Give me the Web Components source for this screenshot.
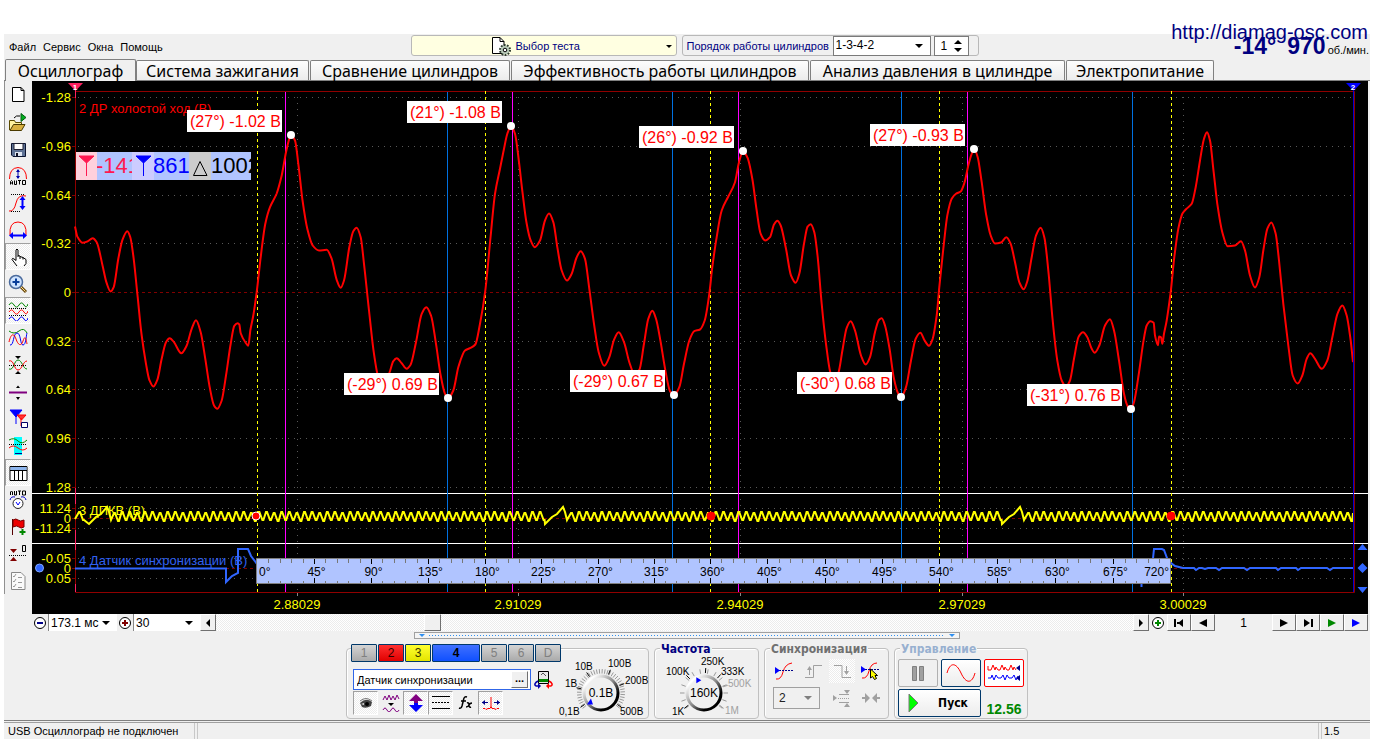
<!DOCTYPE html>
<html lang="ru">
<head>
<meta charset="utf-8">
<title>Осциллограф</title>
<style>
  body { margin: 0; background: #fff; font: 11px/14px "Liberation Sans", Arial, sans-serif; color: #000; }
</style>
</head>
<body>
<osc-app></osc-app>
<script>
const RESET = `
  *, :host { box-sizing: border-box; }
  button, input, select { font: inherit; color: inherit; margin: 0; padding: 0; border: 0; border-radius: 0; background: none; outline: 0; appearance: none; }
  button { display: flex; align-items: center; justify-content: center; }
  svg { display: block; }
  .dd { position: relative; display: flex; }
  .dd select { width: 100%; }
  .dd::after { content: ""; position: absolute; right: 7px; top: 50%; margin-top: -2px; border: 4px solid transparent; border-top-color: currentColor; border-bottom: 0; pointer-events: none; }
`;
function define(name, html, init) {
  const tpl = document.createElement('template');
  customElements.define(name, class extends HTMLElement {
    connectedCallback() {
      if (this.shadowRoot) return;
      tpl.innerHTML = typeof html === 'function' ? html(this) : html;
      this.attachShadow({ mode: 'open' }).append(tpl.content.cloneNode(true));
      if (init) init(this.shadowRoot, this);
    }
  });
}
const DITHER = 'background: repeating-conic-gradient(#fff 0 25%, #ececec 0 50%) 0 0 / 2px 2px;';

/* ---------- header ---------- */
define('osc-header', `
<style>${RESET}
  :host { display: grid; grid-template-columns: 1fr auto 1fr; height: 25px; position: relative; }
  nav { display: flex; gap: 7px; padding: 6px 5px 0; }
  nav a { color: #000; text-decoration: none; }
  .mid { display: flex; gap: 5px; margin-left: 15px; padding-top: 1px; color: navy; }
  .test { width: 266px; height: 21px; border: 1px solid #b8b8b8; border-radius: 3px; background: #ffffe1; position: relative; justify-content: flex-start; padding-left: 78px; gap: 4px; }
  .test::after { content: ""; position: absolute; right: 4px; top: 9px; border: 3px solid transparent; border-top-color: #000; border-bottom: 0; }
  .order { width: 297px; height: 21px; border: 1px solid #b8b8b8; border-radius: 3px; display: flex; align-items: center; padding-left: 4px; gap: 3px; }
  .order > label { flex: 1; white-space: nowrap; }
  .order .dd { flex: none; width: 98px; height: 20px; border: 1px solid #7a7a7a; background: #fff; color: #000; }
  .dd select { padding: 0 2px 2px; font-size: 12px; }
  .spin { width: 35px; height: 20px; border: 1px solid #7a7a7a; background: #fff; margin-right: 9px; display: flex; align-items: center; justify-content: space-between; color: #000; padding: 0 6px; }
  .spin input { width: 12px; font-size: 12px; }
  .rpm { display: flex; justify-content: flex-end; align-items: baseline; gap: 11px; color: navy; font: bold 23px/25px "Liberation Sans", Arial, sans-serif; padding-right: 1px; }
  .rpm small { font: 11px/14px "Liberation Sans", Arial, sans-serif; color: #000; margin-left: -9px; }
  .site { position: absolute; right: 2px; top: -14px; color: navy; font-size: 20px; line-height: 24px; text-decoration: none; }
</style>
<nav><a href="#file">Файл</a><a href="#service">Сервис</a><a href="#windows">Окна</a><a href="#help">Помощь</a></nav>
<div class="mid">
  <button class="test">
    <svg width="22" height="20" viewBox="0 0 22 20"><path d="M2.500 1.500H10l4 4V17.500H2.500Z" fill="#fff" stroke="#000"/><path d="M10 1.500v4h4" fill="none" stroke="#000"/><circle cx="15" cy="14" r="4.500" fill="#b9cbb9" stroke="#2c3a2c" stroke-width="3" stroke-dasharray="1.600 1.200"/><circle cx="15" cy="14" r="4" fill="#b9cbb9"/><circle cx="15" cy="14" r="1.800" fill="#fff" stroke="#000"/></svg>
    <span>Выбор теста</span></button>
  <div class="order"><label for="ord">Порядок работы цилиндров</label>
    <div class="dd"><select id="ord"><option>1-3-4-2</option></select></div>
    <div class="spin"><input aria-label="Цилиндр" value="1"><svg width="8" height="14" viewBox="0 0 8 14"><path d="M0 5 4 1 8 5ZM0 9 4 13 8 9Z"/></svg></div>
  </div>
</div>
<div class="rpm"><span>-14°</span><span>970</span><small>об./мин.</small></div>
<a class="site" href="http://diamag-osc.com">http://diamag-osc.com</a>
`);

/* ---------- tabs ---------- */
define('osc-tabs', `
<style>${RESET}
  :host { display: flex; gap: 1px; height: 22px; align-items: flex-end; border-bottom: 1px solid #808080; font: 16px/20px "Noto Sans", "Open Sans", sans-serif; }
  button { height: 20px; padding: 0; white-space: nowrap; border: 1px solid #808080; border-bottom: 0; border-radius: 2px 2px 0 0; background: linear-gradient(#fdfdfd, #ececec); }
  button[aria-selected=true] { height: 22px; margin: 0 -1px -1px 1px; background: #f0f0f0; }
</style>
<button role="tab" aria-selected="true" style="width:131px">Осциллограф</button><button role="tab" style="width:173px">Система зажигания</button><button role="tab" style="width:200px">Сравнение цилиндров</button><button role="tab" style="width:298px">Эффективность работы цилиндров</button><button role="tab" style="width:255px">Анализ давления в цилиндре</button><button role="tab" style="width:148px">Электропитание</button>
`);

/* ---------- left tool rail ---------- */
const wave = (y, c, a = 3) => `<path d="M1 ${y}q2.500-${a * 1.4} 5 0t5 0 5 0 4-1" stroke="${c}"/>`;
const TOOLS = [
  ['Новый', '<path d="M4.500 2.500H13l3 3V16.500H4.500Z" fill="#fff" stroke="#000"/><path d="M13 2.500v3h3" stroke="#000"/>'],
  ['Открыть', '<path d="M1.500 18V8.500h5l1 2h6V13" fill="#fff3a0" stroke="#5a4a00"/><path d="M2 18.500 5.500 12.500H17L13.500 18.500Z" fill="#d8b040" stroke="#4a3a00"/><path d="M13 1.500v8l5-4Z" fill="#00b020" stroke="#045a10"/><path d="M6 6q2-3 6-2" stroke="#000"/>'],
  ['Сохранить', '<path d="M3.500 4.500H17.500V17.500H5L3.500 16Z" fill="#5f7396" stroke="#0c1430"/><path d="M6 4.500h9v6H6Z" fill="#fff" stroke="#223"/><path d="M7 13h7v4H7Z" fill="#dfe6f2"/><path d="M8 14h2v3H8Z" fill="#112"/>'],
  ['Авто', '<path d="M1.500 13q0-11 8.500-11.500Q18.500 2 18.500 13" stroke="#f00"/><path d="M10 4v8" stroke="#00a"/><path d="M8 6l2-3 2 3ZM8 10l2 3 2-3Z" fill="#00a"/><path d="M2.500 18.500v-3l1-1 1 1v3M3 17h2M6.500 14.500v4h2v-4M10 14.500h3M11.500 14.500v4M14.500 14.500h3v4h-3Z" stroke="#000"/>'],
  ['Амплитуда', '<path d="M1 18q5 1 7-8T18 3" stroke="#f00"/><path d="M3 1.500h14M3 18.500h10" stroke="#000" stroke-dasharray="1 1"/><path d="M14.500 5v10" stroke="#00f" stroke-width="2"/><path d="M11.500 7l3-4 3 4ZM11.500 13l3 4 3-4Z" fill="#00f"/>'],
  ['Период', '<path d="M2 15Q1 2 10 2t8 13" stroke="#f00"/><path d="M4 15.500h12" stroke="#00f" stroke-width="2"/><path d="M5 12v7l-4-3.500ZM15 12v7l4-3.500Z" fill="#00f"/>'],
  ['Рука', '<path d="M9 19 4 12.500Q4 10.500 6 12l2 1.500V3q1-2 2 0v6l2 .5 2 1 2 .5 2 1.500v4L16 19Z" fill="#fff"/><path d="M9 19 4 12.500Q4 10.500 6 12l2 1.500V3q1-2 2 0v7M10 8.500l2 .5v3M12 9.500l3 1v2M15 10.500l3 2v4L16 19" stroke="#000"/>', 1],
  ['Лупа', '<circle cx="8" cy="8" r="6.500" fill="#cfe4ff" stroke="#4a6a9c" stroke-width="1.500"/><path d="M8 4.500v7M4.500 8h7" stroke="#0a3f9a" stroke-width="2"/><path d="M13 13l5 5" stroke="#6b4a10" stroke-width="3"/><path d="M13 13l4.500 4.500" stroke="#ffe08a"/>'],
  ['Каналы раздельно', wave(4, '#080') + wave(11, '#f00') + wave(18, '#00f') + '<path d="M1 7.500h18M1 14.500h18" stroke="#000" stroke-dasharray="1 1"/>', 1],
  ['Каналы вместе', '<path d="M1 3q5 4 10 0t8 2" stroke="#080"/><path d="M2 17C6 18 5 5 9 5s3 12 6 12 3-9 4-12" stroke="#00f"/><path d="M1 14C3 5 6 5 8 11s5 8 7 2 3-3 4 3" stroke="#f00"/>'],
  ['Центр', '<path d="M1 14c5 2 5-9 9-9s5 9 9 9" stroke="#080"/><path d="M1 6c5-2 5 9 9 9s5-9 9-9" stroke="#f00"/><path d="M1 10.500h18" stroke="#000" stroke-dasharray="1 1"/><path d="M7 1h6l-3 3ZM7 19h6l-3-3Z" fill="#000"/>'],
  ['Разделитель', '<path d="M1 10.500h18" stroke="#800080" stroke-width="2"/><path d="M8 6h4L10 3.500ZM8 15h4l-2 3Z" fill="#000"/>'],
  ['Маркеры', '<path d="M2 1h12L8 8ZM8 6v9" fill="#00f" stroke="#00f"/><path d="M9 6h9l-4.500 5ZM13 9v8" fill="#f33" stroke="#f00"/><path d="M13.500 13.500h6v5h-6Z" fill="#fff" stroke="#006"/>'],
  ['Участок', '<path d="M6 1h8v18H6Z" fill="#0ff"/><path d="M1 4q5-3 9 1t9-1" stroke="#080"/><path d="M1 12q4-4 9 0t9 0" stroke="#f00"/><path d="M1 8.500h18" stroke="#000" stroke-dasharray="1 1"/><path d="M7 17.500h7" stroke="#008"/>'],
  ['Таблица', '<path d="M2 3.500h17v14H2Z" fill="#fff" stroke="#000"/><path d="M2.500 4h16v3h-16Z" fill="#8cb4ec"/><path d="M2 7.500h17M6.500 7v10M10.500 7v10M14.500 7v10" stroke="#000"/>', 1],
  ['Авто В', '<path d="M2.500 5v-3l1-1 1 1v3M6.500 1v4h2V1M10 1h3M11.500 1v4M14.500 1h3v4h-3Z" stroke="#000"/><circle cx="10" cy="13.500" r="5" fill="#fff" stroke="#222"/><path d="M8 12l2 3 2-3" stroke="#00f"/><path d="M2 10q1-4 5-3M18 10q-1-4-5-3" stroke="#00c"/>'],
  ['Флаг', '<path d="M4.500 2v16" stroke="#500"/><path d="M5 3q3-2 5 0t6 0v7q-3 2-5 0t-6 0Z" fill="#e00" stroke="#700"/><path d="M14.500 12v6M11.500 15h6" stroke="#080" stroke-width="2"/>'],
  ['Нуль', '<path d="M2 5h7l-3.500 4ZM2 17h7L5.500 13Z" fill="#800000"/><path d="M1 11.500h18" stroke="#000" stroke-dasharray="1 1"/><path d="M14.500 1.500h3v6h-3Z" stroke="#000"/>'],
  ['Отчёт', '<path d="M3.500 1.500H13l4 4v13H3.500Z" fill="#fafafa" stroke="#888"/><path d="M5 5l1 1 2-3M5 10l1 1 2-3M5 15l1 1 2-3M10 6.500h4M10 11.500h4M10 16.500h4" stroke="#999"/>'],
];
define('tool-rail', `
<style>${RESET}
  :host { display: flex; flex: none; flex-direction: column; width: 28px; border-left: 1px solid #909090; }
  button { width: 26px; height: 27px; border: 1px solid transparent; }
  button.on { border-color: #a0a0a0 #fff #fff #a0a0a0; ${DITHER} }
  svg { fill: none; }
</style>` + TOOLS.map(([n, d, on]) => `<button title="${n}" class="${on ? 'on' : ''}"><svg width="20" height="20" viewBox="0 0 20 20">${d}</svg></button>`).join(''));

/* ---------- oscillogram ---------- */
const SEG = [
  [70, '15,408 22,438 38,457 52,453 68,443 80,455 98,527 110,578 122,603 131,590 145,505 158,446 172,422 181,440 191,505 203,620 215,735 228,820 238,868 250,888 262,868 275,805 288,755 299,743 312,755 334,788 350,765 365,715 378,689 392,725 405,800 420,895 432,945 442,955 455,930 468,855 482,760 493,706 503,698 508,702 512,728 528,758 535,766 541,720 550,675 562,590 572,500 586,400 600,350 620,309 635,255 648,185 658,145 663,135 675,150 685,220 697,325 712,415 728,465 747,480 770,478 785,505 800,568 812,592 822,570 838,470 850,422 860,412 872,440 882,520 897,660 912,790 925,860 940,885 958,848 970,812 980,803 995,818 1010,835 1022,822 1038,755 1055,670 1069,650 1083,675 1098,760 1112,855 1125,910 1134,923 1150,900 1165,830 1185,780 1200,773 1216,762 1230,700 1246,600 1262,435 1275,310 1290,235'],
  [500, '10,185 22,130 33,107 45,130 57,215 68,310 80,400 92,450 104,470 120,450 135,390 147,369 160,395 172,470 185,540 201,570 215,550 230,500 242,482 255,505 268,595 282,700 296,785 313,826 328,800 342,748 356,725 372,755 388,815 403,850 418,838 432,760 445,685 457,661 468,685 482,755 497,845 510,902 522,914 538,890 552,820 568,750 583,722 600,717 614,690 628,610 637,530 650,440 665,360 685,318 705,275 717,215 729,184 742,200 757,265 770,360 782,430 796,450 810,440 822,402 832,391 842,405 858,475 873,555 887,577 898,550 912,460 923,408 932,401 943,425 953,500 965,640 978,760 992,850 1003,868 1015,848 1028,775 1040,712 1052,692 1065,720 1083,795 1097,822 1110,800 1125,725 1137,688 1145,683 1155,705 1168,770 1182,865 1195,910 1203,920 1218,890 1233,810 1247,745 1261,727 1275,752 1287,766'],
  [930, '8,745 20,675 28,590 40,475 52,375 65,325 78,310 92,303 103,278 115,225 125,190 133,177 143,200 155,275 168,370 182,435 195,459 213,456 229,440 242,460 255,515 268,575 281,596 292,572 305,500 318,435 332,412 343,440 355,540 368,690 382,810 395,870 408,888 420,870 432,805 446,738 459,725 472,740 485,775 494,787 508,765 525,705 540,686 552,720 567,810 582,910 592,945 602,957 612,935 625,860 640,755 650,705 661,692 671,697 675,735 684,764 687,738 693,740 697,760 702,730 710,690 722,605 733,500 745,415 757,370 768,356 785,340 797,290 810,210 822,145 831,125 840,150 850,235 862,340 877,425 893,467 915,465 933,452 945,480 960,555 975,591 988,560 1000,480 1012,415 1024,396 1037,430 1047,510 1060,640 1075,765 1088,855 1103,879 1117,855 1130,805 1141,788 1155,805 1175,835 1192,810 1208,735 1223,668 1237,645 1250,675 1262,750 1269,815'],
];
function mainTrace() {
  const p = SEG.flatMap(([x0, s]) => s.split(' ').map(q => { const [x, y] = q.split(','); return [x0 + x / 3, 90.5 + y / 3]; }));
  /* monotone cubic: no overshoot at peaks */
  const n = p.length, d = [], m = [];
  for (let i = 0; i < n - 1; i++) d.push((p[i + 1][1] - p[i][1]) / (p[i + 1][0] - p[i][0]));
  for (let i = 0; i < n; i++) {
    if (!i) m.push(d[0]); else if (i === n - 1) m.push(d[n - 2]);
    else m.push(d[i - 1] * d[i] <= 0 ? 0 : 2 * d[i - 1] * d[i] / (d[i - 1] + d[i]));
  }
  let s = `M${p[0]}`;
  for (let i = 0; i < n - 1; i++) {
    const h = (p[i + 1][0] - p[i][0]) / 3;
    s += `C${(p[i][0] + h).toFixed(1)} ${(p[i][1] + m[i] * h).toFixed(1)} ${(p[i + 1][0] - h).toFixed(1)} ${(p[i + 1][1] - m[i + 1] * h).toFixed(1)} ${p[i + 1][0].toFixed(1)} ${p[i + 1][1].toFixed(1)}`;
  }
  return s;
}
function crankTrace() {
  const gaps = [[87, 110], [543, 567], [1000, 1024]];
  let s = 'M75 519', x = 77, k = 0;
  while (x < 1346) {
    const g = gaps.find(g => x >= g[0] - 3 && x < g[1]);
    if (g) { s += `L${g[0] + 2} 524L${g[0] + 4} 522L${g[0] + 9} 517L${g[0] + 14} 514L${g[0] + 20} 507L${g[0] + 22} 512L${g[0] + 24} 520`; x = g[1] + 2; continue; }
    const w = k++ % 3;
    s += `L${(x + 2).toFixed(1)} ${512 + w % 2}h1L${(x + 6).toFixed(1)} ${520 + (w === 1)}h1`;
    x += 7.6;
  }
  return s + 'L1353 513';
}
define('osc-chart', () => {
  const rows = [['-1.28', 97], ['-0.96', 146], ['-0.64', 195], ['-0.32', 243], ['0', 292], ['0.32', 341], ['0.64', 389], ['0.96', 438], ['1.28', 487], ['11.24', 508], ['0', 518], ['-11.24', 528], ['-0.05', 558], ['0', 568], ['0.05', 578]];
  const cols = [['2.88029', 297], ['2.91029', 518], ['2.94029', 740], ['2.97029', 962], ['3.00029', 1183]];
  let g = '';
  for (const [t, y] of rows) {
    g += t === '0' ? `<path class="zero" d="M76 ${y}.5H1353"/>` : `<path class="dots" d="M78 ${y}.5H1353"/>`;
    g += `<path d="M72 ${y}.5h4" stroke="maroon"/><text x="71" y="${y + 5}" text-anchor="end" class="ax">${t}</text>`;
  }
  for (const [t, x] of cols) g += `<path class="dots" d="M${x}.500 97V592"/><path d="M${x}.500 593v3" stroke="#888"/><text x="${x}" y="609" text-anchor="middle" class="ax">${t}</text>`;
  let lines = '';
  for (const x of [257, 485, 710, 939, 1171]) lines += `<path d="M${x}.500 91V592" stroke="#ff0" stroke-dasharray="3 3"/>`;
  for (const x of [285, 512, 738, 967]) lines += `<path d="M${x}.500 92V592" stroke="#f0f"/>`;
  for (const x of [447, 672, 901, 1132]) lines += `<path d="M${x}.500 92V592" stroke="#0070e0"/>`;
  const anchors = [257.5, 485.5, 710.5, 939.5, 1171.5];
  const at = deg => { const i = Math.min(3, Math.floor(deg / 180)); return anchors[i] + (anchors[i + 1] - anchors[i]) * (deg - 180 * i) / 180; };
  let ruler = '<path d="M256.500 558.500H1170.500V583.500H256.500Z" fill="#b0c4ff" stroke="#808080"/>';
  for (let a = 9; a < 720; a += 9) {
    const x = Math.floor(at(a)) + 0.5, big = a % 45 === 0;
    ruler += `<path d="M${x} 559v${big ? 5 : 4}M${x} 583v-${big ? 5 : 2}" stroke="${big ? '#000' : '#777'}"/>`;
    if (big) ruler += `<text x="${x + 2}" y="576" text-anchor="middle" class="deg">${a}°</text>`;
  }
  ruler += '<text x="259" y="576" class="deg">0°</text><text x="1169" y="576" text-anchor="end" class="deg">720°</text>';
  const tags = [[187, 110, 291, 135, '(27°) -1.02 В'], [407, 101, 511, 126, '(21°) -1.08 В'], [639, 126, 743, 151, '(26°) -0.92 В'], [870, 124, 974, 149, '(27°) -0.93 В'], [344, 373, 448, 398, '(-29°) 0.69 В'], [570, 370, 674, 395, '(-29°) 0.67 В'], [797, 372, 901, 397, '(-30°) 0.68 В'], [1027, 384, 1131, 409, '(-31°) 0.76 В']];
  const tag = tags.map(([x, y, cx, cy, t]) => `<path d="M${x} ${y}h95v22h-95Z" fill="#fff"/><text x="${x + 3}" y="${y + 17}" class="tag">${t}</text><circle cx="${cx}" cy="${cy}" r="4" fill="#fff"/>`).join('');
  return `
<style>
  :host { display: block; flex: 1; min-width: 0; background: #000; }
  :host > svg { display: block; width: 100%; height: auto; fill: none; font-family: "Liberation Sans", Arial, sans-serif; }
  .dots { stroke: #585858; stroke-dasharray: 1 5; }
  .zero { stroke: #800000; stroke-dasharray: 3 3; }
  .ax { font-size: 13px; fill: #ff0; }
  .deg { font-size: 12px; fill: #000; }
  .tag { font-size: 16px; fill: #f00; }
  .big { font-size: 22px; }
  .name { font-size: 13px; }
</style>
<svg viewBox="32 81 1336 533">
  ${g}
  <path d="M75.500 91.500H1354.500V592.500H75.500Z" stroke="#900000"/>
  <path d="M32 493.500H1368M32 543.500H1368" stroke="#fff"/>
  <text x="79" y="113" class="name" fill="#f00">2 ДР холостой ход (В)</text>
  <text x="79" y="515" class="name" fill="#ff0">3 ДПКВ (В)</text>
  <text x="79" y="565" class="name" fill="#3060f0">4 Датчик синхронизации (В)</text>
  ${lines}
  <path d="${mainTrace()}" stroke="#f00" stroke-width="2"/>
  <path d="${crankTrace()}" stroke="#ff0" stroke-width="2"/>
  <path d="M75 568.500H226V582L232 576 238 573V549H248L251 556 257 564M1141.500 580v7M1152 568l2-19h8l2 1 3 8 4 5 4 3 8 2H1194l2 2 3-2h3l3 1 3-1h8l3 2 3-2H1244l3 2 3-2H1276l2 2 3-2H1296l2 2 3-2H1327l3 2 3-2H1353" stroke="#3066ff" stroke-width="2"/>
  <path d="M1353.500 91V592" stroke="#0000d0"/>
  ${ruler}
  ${[256, 711, 1171].map(x => `<circle cx="${x}" cy="516" r="4" fill="#f00" stroke="${x === 256 ? '#fff' : '#f00'}"/>`).join('')}
  <path d="M75.500 90v8M75.500 488v16M75.500 530v20M75.500 584v8" stroke="#ff2060"/>
  <path d="M68 83H83L75.500 91Z" fill="#ff2060"/><text x="75" y="90" text-anchor="middle" font-size="8" font-weight="bold" fill="#fff">1</text>
  <path d="M1346 83h15l-7.500 8Z" fill="#00f"/><text x="1353" y="90" text-anchor="middle" font-size="8" font-weight="bold" fill="#fff">2</text>
  <circle cx="39.500" cy="568" r="4" fill="#3066ff" stroke="#80a8ff"/>
  <path d="M1357.500 550h10l-5-6ZM1357.500 568l5-5 5 5-5 5ZM1357.500 587h10l-5 6Z" fill="#3066ff"/>
  <path d="M76 152H251V180H76Z" fill="#b0c4ff"/><path d="M76 152h21v28H76Z" fill="#ffd0dc"/><path d="M132 152h22v28H132Z" fill="#ccccff"/><path d="M189 152h22v28H189Z" fill="#ccc"/>
  <path d="M79 156H94L86.500 163ZM86.500 162V176" fill="#ff1850" stroke="#ff1850"/><path d="M136 156h15l-7.500 7ZM143.500 162V176" fill="#00f" stroke="#00f"/><path d="M200 161.500 207 175.500H193.500Z" stroke="#000"/>
  <svg x="97" y="152" width="35" height="28"><text x="-1" y="21" class="big" fill="#ff1850">-141</text></svg>
  <svg x="154" y="152" width="35" height="28"><text x="-1" y="21" class="big" fill="#00f">861</text></svg>
  <svg x="211" y="152" width="40" height="28"><text x="0" y="21" class="big" fill="#000">1002</text></svg>
  ${tag}
</svg>`;
});

/* ---------- sweep / scroll row ---------- */
define('osc-scroll', `
<style>${RESET}
  :host { display: flex; height: 18px; padding-left: 28px; font-size: 12px; }
  .btn { height: 17px; background: #f0f0f0; border: 1px solid; border-color: #fff #707070 #707070 #fff; }
  .round { width: 16px; }
  .dd { background: #fff; height: 17px; border-left: 1px solid #888; }
  .dd select { padding: 0 2px; }
  .track { flex: 1; height: 17px; ${DITHER} padding-left: 208px; }
  .thumb { width: 17px; }
  output { width: 57px; text-align: center; line-height: 18px; }
  .s { width: 16px; } .m { width: 24px; }
  svg { fill: #000; }
</style>
<button class="round" title="Сжать"><svg width="14" height="14"><circle cx="7" cy="7" r="5.500" fill="#fff" stroke="#000"/><path d="M4 6h6v2H4Z" fill="#008"/></svg></button>
<label class="dd" style="width:69px"><select aria-label="Развёртка"><option>173.1 мс</option></select></label>
<button class="round" title="Растянуть"><svg width="14" height="14"><circle cx="7" cy="7" r="5.500" fill="#fff" stroke="#000"/><path d="M4 6h6v2H4ZM6 4h2v6H6Z" fill="maroon"/></svg></button>
<label class="dd" style="width:67px"><select aria-label="Масштаб"><option>30</option></select></label>
<button class="btn s" title="Влево"><svg width="6" height="8"><path d="M5 0v8L1 4Z"/></svg></button>
<div class="track"><button class="btn thumb" title="Ползунок"></button></div>
<button class="btn s" title="Вправо"><svg width="6" height="8"><path d="M1 0v8l4-4Z"/></svg></button>
<button class="round" style="width:18px" title="Добавить"><svg width="14" height="14"><circle cx="7" cy="7" r="5.500" fill="#fff" stroke="#000"/><path d="M4 6h6v2H4ZM6 4h2v6H6Z" fill="#080"/></svg></button>
<button class="btn m" title="В начало"><svg width="10" height="8"><path d="M0 0h2v8H0ZM3 3h3v2H3ZM9 0v8L4 4Z"/></svg></button>
<button class="btn m" title="Назад"><svg width="10" height="8"><path d="M9 0v8L1 4Z"/></svg></button>
<output>1</output>
<button class="btn m" title="Вперёд"><svg width="10" height="8"><path d="M1 0v8l8-4Z"/></svg></button>
<button class="btn m" title="В конец"><svg width="10" height="8"><path d="M8 0h2v8H8ZM1 0v8l6-4Z"/></svg></button>
<button class="btn m" title="Воспроизвести"><svg width="10" height="8"><path d="M1 0v8l8-4Z" fill="#080"/></svg></button>
<button class="btn m" title="Далее"><svg width="10" height="8"><path d="M1 0v8l8-4Z" fill="#00f"/></svg></button>
`);

define('panel-splitter', `
<style>
  :host { display: flex; align-items: center; gap: 4px; box-sizing: border-box; width: 546px; height: 7px; margin: 0 auto; padding: 0 4px; border: 1px solid #a0a0a0; background: #f4f4f4; }
  i { border: 3px solid transparent; border-top-color: #3090f0; border-bottom: 0; }
  b { flex: 1; height: 1px; background: repeating-linear-gradient(90deg, #3090f0 0 1px, transparent 1px 3px); }
</style><i></i><b></b><i></i>`);

/* ---------- lower panel pieces ---------- */
define('group-box', el => `
<style>
  :host { display: block; box-sizing: border-box; height: 75px; padding-top: 4px; position: relative; }
  section { box-sizing: border-box; height: 71px; border: 1px solid #c0c0c0; border-radius: 4px; box-shadow: inset 1px 1px #fff; }
  h2 { position: absolute; left: 6px; top: -1px; margin: 0; padding: 0 1px; background: #f0f0f0; font: bold 12px/12px "DejaVu Sans Condensed", "DejaVu Sans", sans-serif; color: ${el.getAttribute('tone') || 'navy'}; }
</style><section><slot></slot></section>${el.getAttribute('label') ? `<h2>${el.getAttribute('label')}</h2>` : ''}`);

define('rotary-knob', el => {
  const labels = JSON.parse(el.getAttribute('labels')), cx = +el.getAttribute('cx'), cy = 40;
  let t = '';
  for (let a = -130; a <= 130; a += el.hasAttribute('fine') ? 7 : 20) {
    const r = a * Math.PI / 180, s = Math.sin(r), c = -Math.cos(r);
    t += `<path d="M${cx + s * 19.5} ${cy + c * 19.5}L${cx + s * 24} ${cy + c * 24}" stroke="#999"/>`;
  }
  for (const [txt, x, y, anchor, deg, off] of labels) {
    const r = deg * Math.PI / 180, s = Math.sin(r), c = -Math.cos(r), col = off ? '#a0a0a0' : '#000';
    t += `<path d="M${cx + s * 20} ${cy + c * 20}L${cx + s * 25} ${cy + c * 25}" stroke="${col}"/><text x="${x}" y="${y}" text-anchor="${anchor}" fill="${col}">${txt}</text>`;
  }
  const pr = +el.getAttribute('pointer') * Math.PI / 180, px = cx + Math.sin(pr) * 14, py = cy - Math.cos(pr) * 14;
  const shape = el.hasAttribute('fine') ? `M${px - 3} ${py + 3}h6l-2-6Z` : `M${px - 2} ${py - 3}v6l5-3Z`;
  return `
<style>
  :host { display: block; flex: none; }
  svg { display: block; overflow: visible; font: 10px "Liberation Sans", Arial, sans-serif; }
  .v { font-size: 12px; }
</style>
<svg width="${el.getAttribute('width')}" height="64"><defs><linearGradient id="k" x1="0" y1="0" x2="1" y2="1"><stop offset=".15" stop-color="#fff"/><stop offset=".5" stop-color="#888"/><stop offset=".75" stop-color="#000"/></linearGradient></defs>
${t}<circle cx="${cx}" cy="${cy}" r="17" fill="#f0f0f0" stroke="url(#k)" stroke-width="3"/>
<path d="${shape}" fill="#00f"/>
<text class="v" x="${cx}" y="${cy + 4}" text-anchor="middle">${el.getAttribute('value')}</text></svg>`;
});

define('channel-panel', `
<style>${RESET}
  :host { display: flex; }
  .left { width: 208px; flex: none; padding-left: 4px; }
  .ch { display: flex; gap: 1px; margin-top: -5px; position: relative; width: 210px; background: #f0f0f0; }
  .ch button { flex: none; width: 26px; height: 18px; border: 1px solid #00386a; border-radius: 1px; background: linear-gradient(#d4d4d4, #aaa); color: #808080; font-size: 12px; }
  .ch .r { background: linear-gradient(#ff3030, #e00000); color: #300; }
  .ch .y { background: linear-gradient(#ffff30, #e4e400); color: #330; }
  .ch .b { width: 48px; background: linear-gradient(#4070ff, #1050ff); color: #000; font-weight: bold; }
  .row { display: flex; align-items: center; margin: 7px 0 0 2px; gap: 3px; }
  .box { display: flex; width: 178px; height: 21px; border: 1px solid #3066e8; background: #fff; padding: 1px 2px 1px 3px; }
  .box input { flex: 1; min-width: 0; font-size: 11px; }
  .box button { width: 17px; background: #f0f0f0; border: 1px solid; border-color: #fff #707070 #707070 #fff; font-weight: bold; line-height: 8px; padding-bottom: 4px; }
  .icons { display: flex; justify-content: space-between; width: 150px; margin: 1px 0 0 2px; }
  .icons button { width: 25px; height: 24px; border: 1px solid transparent; }
  .icons .on { border-color: #a0a0a0 #fff #fff #a0a0a0; ${DITHER} }
  svg { fill: none; }
  rotary-knob { margin: 4px 0 0 -2px; }
</style>
<div class="left">
  <div class="ch"><button>1</button><button class="r">2</button><button class="y">3</button><button class="b">4</button><button>5</button><button>6</button><button>D</button></div>
  <div class="row"><div class="box"><input aria-label="Датчик" value="Датчик синхронизации"><button title="Выбрать">...</button></div>
    <svg width="19" height="20" viewBox="0 0 19 20"><path d="M4.500 1.500h10v12h-10Z" fill="#e8e8e8" stroke="#000"/><path d="M5 9h9v3H5Z" fill="#080"/><path d="M7 5l2-2 3 3" stroke="#555"/><path d="M4 11q-5 3-2 5h3" stroke="#00a" stroke-width="1.500"/><path d="M15 11q5 3 2 5h-3" stroke="#f00" stroke-width="1.500"/><path d="M4 13v6l3-3Z" fill="#00a"/><path d="M15 13v6l-3-3Z" fill="#f00"/></svg></div>
  <div class="icons">
    <button class="on" title="Видимость"><svg width="18" height="18"><path d="M3 9q6-6 12-1l-1 4q-5 3-9 1Z" fill="#444"/><circle cx="10" cy="10" r="2" fill="#000"/><path d="M4 10l3-1v2Z" fill="#ddd"/><path d="M3 7q6-5 12 0" stroke="#777"/></svg></button>
    <button title="Фильтр"><svg width="18" height="18"><path d="M1 6l2-4 2 4 2-5 2 5 2-4 2 4 2-5 2 4M1 16q2-4 4 0t4 0 4 0 4 0" stroke="#800080"/><path d="M6 9h6l-3 3Z" fill="#000"/></svg></button>
    <button class="on" title="Инверсия"><svg width="18" height="18"><path d="M9 0l7 7h-5v2H7V7H2Z" fill="#800080"/><path d="M9 18l7-7h-5V9H7v2H2Z" fill="#00f"/></svg></button>
    <button class="on" title="Линии"><svg width="18" height="18"><path d="M0 2.500h18M0 14.500h18" stroke="#000"/><path d="M0 8.500h18" stroke="#000" stroke-dasharray="2 1"/></svg></button>
    <button title="Формула"><svg width="18" height="18"><path d="M10 3q-3-1-3.500 3L5 12q-1 3-3 2M4 7h5M10 9q2-1 2 2t2 2M15 9q-2 0-3 2t-3 2" stroke="#000" stroke-width="1.500"/></svg></button>
    <button class="on" title="Смещение"><svg width="18" height="18"><path d="M1 14.500h2l1 1 2-1h2l1-2V3M17 14.500h-2l-1 1-2-1h-2l-1-2" stroke="#f00"/><path d="M0 8.500h6M12 8.500h6" stroke="#008"/><path d="M3 6v5L0 8.500ZM15 6v5l3-2.500Z" fill="#008"/></svg></button>
  </div>
</div>
<rotary-knob fine cx="48" width="98" value="0.1В" pointer="-128" labels='[["0,1В",6,62,"start",-125],["1В",12,34,"start",-78],["10В",22,17,"start",-35],["100В",55,14,"start",22],["200В",72,31,"start",68],["500В",67,62,"start",125]]'></rotary-knob>
`);

define('sync-panel', `
<style>${RESET}
  :host { display: grid; grid-template-columns: 28px 28px 28px 28px; gap: 3px 1px; padding: 10px 5px 0; align-items: center; justify-items: center; }
  button { width: 26px; height: 24px; }
  .on { ${DITHER} }
  .dd { grid-column: span 2; justify-self: start; margin-left: 3px; width: 47px; height: 22px; border: 1px solid #a0a0a0; color: #808080; }
  .dd select { padding: 0 5px; font-size: 12px; color: #222; }
  svg { fill: none; }
</style>
<button title="По маркеру"><svg width="18" height="18"><path d="M1 17q5 1 7-7t9-9" stroke="#f00"/><path d="M1 8.500h17" stroke="#008" stroke-dasharray="2 1"/><path d="M0 5v7l5-3.500Z" fill="#00f"/></svg></button>
<button title="Фронт"><svg width="18" height="18"><path d="M1 15.500h8.500v-12H18M5.500 13V5" stroke="#a0a0a0"/><path d="M3 8h5L5.500 4Z" fill="#a0a0a0"/></svg></button>
<button class="on" title="Спад"><svg width="18" height="18"><path d="M1 3.500h8v12h9M13.500 4v8" stroke="#a0a0a0"/><path d="M11 9h5l-2.500 4Z" fill="#a0a0a0"/></svg></button>
<button title="Курсор"><svg width="20" height="18"><path d="M1 16q5 1 7-7t8-8" stroke="#f00"/><path d="M1 7.500h18" stroke="#008" stroke-dasharray="2 1"/><path d="M0 4v7l5-3.500Z" fill="#00f"/><path d="M9.500 7v9l2-1.500 2 3 2-1-1.500-3h2.500Z" fill="#ff0" stroke="#000"/></svg></button>
<label class="dd"><select aria-label="Канал синхронизации"><option>2</option></select></label>
<button title="Уровень"><svg width="18" height="18"><path d="M6 5.500h10M6 13.500h10" stroke="#a0a0a0"/><path d="M5 9.500h12" stroke="#a0a0a0" stroke-dasharray="1 1"/><path d="M0 6v6l4-3ZM11 1h6l-3 4ZM11 18h6l-3-4Z" fill="#a0a0a0"/></svg></button>
<button title="Центр"><svg width="18" height="18"><path d="M0 9h5M13 9h5" stroke="#a0a0a0" stroke-width="2"/><path d="M3 4v10l5-5ZM15 4v10l-5-5Z" fill="#a0a0a0"/></svg></button>
`);

define('run-panel', `
<style>${RESET}
  :host { display: grid; grid-template-columns: 40px 40px 40px; gap: 2px 3px; padding: 10px 3px 0; }
  button { height: 28px; border: 1px solid #00386a; border-radius: 2px; background: linear-gradient(#fff, #ececec); }
  .off { border-color: #b0b0b0; background: #f0f0f0; } .hot { border-color: #f00; background: #fff; }
  .go { grid-column: span 2; font: bold 12px/14px "DejaVu Sans Condensed", "DejaVu Sans", sans-serif; gap: 19px; padding-right: 4px; }
  output { font: bold 14px/14px "Liberation Sans", Arial, sans-serif; color: #080; align-self: center; justify-self: center; padding-top: 12px; margin: 0 -4px; }
  svg { fill: none; }
</style>
<button class="off" title="Пауза"><svg width="12" height="15"><path d="M.500.500h4v14h-4ZM7.500.500h4v14h-4Z" fill="#a0a0a0" stroke="#808080"/></svg></button>
<button title="Один кадр"><svg width="30" height="20"><path d="M1 10C4-1 10-1 15 10s11 11 14 0" stroke="#f00"/></svg></button>
<button class="hot" title="Самописец"><svg width="34" height="20"><path d="M1 3v4h3l2-5 2 5 1-3 2 3h2l2-5 2 5 1-3 2 3h2l2-5 2 5 1-3 2 3" stroke="#f00"/><path d="M1 15h3l1-3 2 5 2-5 2 3h3l2-3 2 5 2-5 2 3h3l2-3 2 5 2-4" stroke="#00f"/><path d="M33 2v6l-4-3ZM33 12v6l-4-3Z" fill="#008"/></svg></button>
<button class="go"><svg width="12" height="20"><path d="M2 1v18l9-9Z" fill="#0f0" stroke="#777"/></svg>Пуск</button>
<output>12.56</output>
`);

define('osc-status', `
<style>
  :host { box-sizing: border-box; display: flex; gap: 2px; height: 17px; margin-top: 1px; padding-left: 1px; line-height: 14px; border-top: 1px solid #a0a0a0; }
  span { box-sizing: border-box; padding: 1px 3px 0; border-right: 1px solid #c8c8c8; white-space: nowrap; }
  .a { width: 190px; } .b { flex: 1; border-left: 1px solid #c8c8c8; } .c { width: 49px; border: 0; border-left: 1px solid #c8c8c8; padding-left: 2px; }
</style>
<span class="a">USB Осциллограф не подключен</span><span class="b"></span><span class="c">1.5</span>`);

define('osc-app', `
<style>
  :host { display: block; padding: 34px 12px 5px 4px; }
  main { background: #f0f0f0; }
  .work { display: flex; align-items: flex-start; padding-right: 2px; }
  osc-scroll { padding-right: 2px; }
  .panels { display: flex; justify-content: center; gap: 5px; padding: 5px 0 1px; border-bottom: 1px solid #808080; }
</style>
<main>
  <osc-header></osc-header>
  <osc-tabs></osc-tabs>
  <div class="work"><tool-rail></tool-rail><osc-chart></osc-chart></div>
  <osc-scroll></osc-scroll>
  <panel-splitter></panel-splitter>
  <div class="panels">
    <group-box style="width:303px"><channel-panel></channel-panel></group-box>
    <group-box label="Частота" style="width:105px"><rotary-knob style="padding-top:4px" cx="49" width="103" value="160K" pointer="-24" labels='[["1K",17,62,"start",-128],["100K",11,22,"start",-45],["250K",46,12,"start",4],["333K",66,22,"start",42],["500K",73,34,"start",72,1],["1M",70,61,"start",128,1]]'></rotary-knob></group-box>
    <group-box label="Синхронизация" tone="#707070" style="width:125px"><sync-panel></sync-panel></group-box>
    <group-box label="Управление" tone="#98b0d0" style="width:134px"><run-panel></run-panel></group-box>
  </div>
  <osc-status></osc-status>
</main>`);
</script>
</body>
</html>
